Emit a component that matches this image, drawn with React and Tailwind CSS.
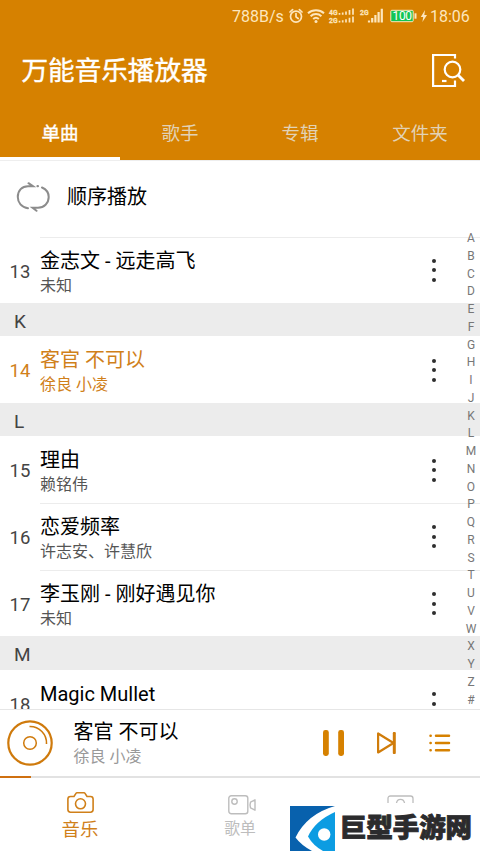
import React from 'react';
import clsx from 'clsx';

const tabs = ['单曲', '歌手', '专辑', '文件夹'];

const rows = [
  { number: 13, title: '金志文 - 远走高飞', artist: '未知' },
  { section: 'K' },
  { number: 14, title: '客官 不可以', artist: '徐良 小凌', active: true },
  { section: 'L' },
  { number: 15, title: '理由', artist: '赖铭伟' },
  { number: 16, title: '恋爱频率', artist: '许志安、许慧欣' },
  { number: 17, title: '李玉刚 - 刚好遇见你', artist: '未知' },
  { section: 'M' },
  { number: 18, title: 'Magic Mullet' },
];

const letters = 'ABCDEFGHIJKLMNOPQRSTUVWXYZ#'.split('');

const StatusBar = () => (
  <div className="flex h-8 items-center pl-[232px] pr-2.5 text-[16px] leading-none text-[#fde6bd]">
    <span className="w-[57px] whitespace-nowrap pt-0.5">788B/s</span>
    <svg className="h-4 w-[130px] shrink-0" viewBox="0 0 130 16" fill="none" stroke="currentColor">
      <g strokeWidth="1.7" strokeLinecap="round">
        <circle cx="7" cy="8.6" r="5.5" />
        <path d="M7 5.5v3.4l2.2 1.6M1 4 3.600 1.600M13 4 10.400 1.600" />
      </g>
      <g strokeWidth="2">
        <path d="M19 5.2c4.4-4 11.6-4 16 0M21.6 8.200c3-2.8 7.8-2.8 10.8 0M24.2 11c1.6-1.5 4-1.5 5.6 0" />
      </g>
      <circle cx="27" cy="13.6" r="1.5" fill="currentColor" stroke="none" />
      <g fill="currentColor" stroke="currentColor" strokeWidth="0.300" fontSize="7.600" fontWeight="700" fontFamily="Roboto">
        <text x="40" y="7" textLength="8.500" lengthAdjust="spacingAndGlyphs">4G</text>
        <text x="40" y="14.600" textLength="8.500" lengthAdjust="spacingAndGlyphs">2G</text>
        <text x="71" y="7" textLength="8.500" lengthAdjust="spacingAndGlyphs">2G</text>
      </g>
      <g strokeWidth="1.700">
        <path d="M50.5 6.8V5M53.7 6.8V4.5M57 6.8V3.5M60.500 6.8V2M64 6.8V.5" />
        <path d="M50.5 14.5v-1.8M53.7 14.5v-2.3M57 14.5v-3.3M60.500 14.5V9.8M64 14.5V8.5" />
      </g>
      <path d="M80 14.5v-2M83.2 14.5V10M86.4 14.5V7M89.6 14.5V4M92.8 14.5V.8" strokeWidth="2.200" />
      <rect x="101.8" y="2.3" width="22.4" height="11.4" rx="1" fill="#12c552" strokeWidth="1" />
      <path d="M126.5 5.3v5.4" strokeWidth="2" />
      <text x="103.500" y="12.4" fontSize="12" textLength="19.500" fill="#fff" stroke="none" fontFamily="Roboto">100</text>
    </svg>
    <svg className="ml-px h-3 w-2 shrink-0" viewBox="0 0 8 12" fill="currentColor">
      <path d="M5 0 .800 6.9h2.4L2.4 12 7 5H4.300z" />
    </svg>
    <span className="ml-0.5 pt-0.5">18:06</span>
  </div>
);

const DeviceSearchIcon = () => (
  <svg className="h-[34px] w-[34px]" viewBox="0 0 34 34" fill="none" stroke="white" strokeWidth="2.200">
    <path d="M24 5.500V2H2.100v31H24v-5.500" />
    <path d="M11 28h4.500" />
    <circle cx="21.5" cy="16.500" r="7.8" />
    <path d="m27 22 6 6" strokeWidth="2.800" />
  </svg>
);

const LoopIcon = () => (
  <svg className="h-[30px] w-[34px]" viewBox="0 0 34 30" fill="none" stroke="#8c8c8c" strokeWidth="2" strokeLinecap="round">
    <path d="M12 26.2C5.500 25.500 1.800 20.500 1.800 15 1.800 8.500 6 4.200 12 4.200h5l-4.500-3" />
    <path d="M26 5.500c4 1.700 6.700 5.300 6.700 9.500 0 6.200-4.700 10.700-10.700 10.700h-5.500l4 3.100" />
    <path d="M21.500 4.200h.4" strokeWidth="2.200" />
  </svg>
);

const MoreButton = () => (
  <button className="flex flex-col items-center gap-[5.500px]">
    <span className="size-1 rounded-full bg-[#2e2e2e]" />
    <span className="size-1 rounded-full bg-[#2e2e2e]" />
    <span className="size-1 rounded-full bg-[#2e2e2e]" />
  </button>
);

const SectionRow = ({ label }) => (
  <div className="flex h-[33.330px] shrink-0 items-center bg-[#ececec] pl-3.5 pt-1 text-[19px] text-[#444]">{label}</div>
);

const SongRow = ({ number, title, artist, active, divider }) => (
  <div className={clsx('flex h-[66.670px] shrink-0', active ? 'text-[#d0801a]' : 'text-black')}>
    <div className={clsx('flex w-10 justify-center pt-[21px] text-[18.500px] leading-[28px]', !active && 'text-[#444]')}>
      {number}
    </div>
    <div className={clsx('flex flex-1 border-t', divider ? 'border-[#ececec]' : 'border-transparent')}>
      <div className="flex-1 pt-[9px]">
        <div className="text-[20px] leading-[28px]">{title}</div>
        {artist && (
          <div className={clsx('text-[16px] leading-[21px]', !active && 'text-[#555]')}>{artist}</div>
        )}
      </div>
      <div className="mr-[44.500px] flex items-center">
        <MoreButton />
      </div>
    </div>
  </div>
);

const SongList = () => (
  <div className="relative h-[472.500px] shrink-0">
    <div className="flex h-full flex-col overflow-hidden">
      {rows.map((row, i) =>
        row.section ? (
          <SectionRow key={row.section} label={row.section} />
        ) : (
          <SongRow key={row.number} {...row} divider={i === 0 || !rows[i - 1].section} />
        )
      )}
    </div>
    <div className="absolute right-0 top-[-6.500px] flex w-[18px] flex-col items-center text-[12px] text-[#777]">
      {letters.map((letter) => (
        <span key={letter} className="h-[17.760px] leading-[17.760px]">{letter}</span>
      ))}
    </div>
  </div>
);

const Player = () => (
  <div className="flex h-[67px] shrink-0 items-center border-t border-[#e6e6e6]">
    <svg className="ml-[7px] size-[46px]" viewBox="0 0 46 46" fill="none" stroke="#cf7a0c">
      <circle cx="23" cy="23" r="21.700" strokeWidth="2.200" />
      <circle cx="23" cy="23" r="6.300" strokeWidth="1.500" />
      <path d="M22.500 6.500A16.500 16.500 0 0 1 39.500 24" strokeWidth="1.600" />
    </svg>
    <div className="ml-[20.500px] flex-1">
      <div className="text-[20px] leading-[27px] text-black">客官 不可以</div>
      <div className="text-[16px] leading-[21px] text-[#999]">徐良 小凌</div>
    </div>
    <svg className="mr-7 h-[26px] w-[22px]" viewBox="0 0 22 26" fill="#d68100">
      <rect x="0" y="0" width="5.800" height="26" rx="2.400" />
      <rect x="15.200" y="0" width="5.800" height="26" rx="2.400" />
    </svg>
    <svg className="mr-8 h-[22px] w-6" viewBox="0 0 24 22" fill="none" stroke="#d07c0a" strokeWidth="2.200" strokeLinejoin="round" strokeLinecap="round">
      <path d="M5.100 1.500v19L20.500 11z" />
      <path d="M21.300 1.300v19.400" strokeWidth="3" />
    </svg>
    <svg className="mr-[29px] h-[18px] w-[22px]" viewBox="0 0 22 18" fill="none" stroke="#d68100" strokeWidth="2.500" strokeLinecap="round">
      <path d="M1.500 1.700h.2M7 1.700h13M1.500 9h.2M7 9h13M1.500 16.300h.2M7 16.300h13" />
    </svg>
  </div>
);

const BottomNav = () => (
  <div className="relative grid h-[75px] shrink-0 grid-cols-3">
    <div className="flex flex-col items-center pt-[13.500px] text-[#d0801a]">
      <svg className="h-[21px] w-[27px]" viewBox="0 0 27 21" fill="none" stroke="currentColor" strokeWidth="1.600">
        <path d="M3.500 4.500H7L9 1.300Q9.300.8 10 .8h7q.7 0 1 .5l2 3.200h3.500q2.600 0 2.600 2.600v10.500q0 2.600-2.600 2.600h-20Q.9 20.200.9 17.600V7.100q0-2.600 2.600-2.600z" />
        <circle cx="13.500" cy="11.800" r="5" />
      </svg>
      <span className="mt-[4px] text-[18.400px] leading-[26px]">音乐</span>
    </div>
    <div className="flex flex-col items-center pt-[17px] text-[#bdbdbd]">
      <svg className="ml-1 h-5 w-7" viewBox="0 0 28 20" fill="none" stroke="currentColor" strokeWidth="1.400" strokeLinejoin="round">
        <rect x=".8" y=".8" width="19" height="18" rx="2.500" />
        <circle cx="6.500" cy="6.500" r="2.700" />
        <path d="M27 4.800v10.400l-4.500-2.400Q21.500 10 22.500 7.200z" />
      </svg>
      <span className="mt-[3px] text-[15.800px] leading-[22px]">歌单</span>
    </div>
    <div className="flex flex-col items-center pt-[17px] text-[#bdbdbd]">
      <svg className="h-2 w-[27px]" viewBox="0 0 27 8" fill="none" stroke="currentColor" strokeWidth="1.300">
        <path d="M1 8V3.500Q1 1 3.500 1h20Q26 1 26 3.500V8M9.500 8q.5-3.700 4-3.700t4 3.700" />
      </svg>
    </div>
    <div className="absolute bottom-0 right-0 flex h-[50px] w-[194px] items-center bg-white pl-1">
      <svg className="size-[45px] shrink-0" viewBox="0 0 45 45">
        <path d="M0 0h45v45H0z" fill="#fff" />
        <path d="M0 0h45Q17 8 5.500 31.500 11 39 22 45H0z" fill="#0861ad" />
        <path d="M45 6Q25 15 18 30.500q5 9 15 14.500h12z" fill="#0c9ce2" />
        <circle cx="34.200" cy="28.500" r="6.200" fill="#fff" />
      </svg>
      <span className="ml-[5px] whitespace-nowrap text-[26.400px] font-black leading-none text-[#2b2b2d] [-webkit-text-stroke:0.900px_#2b2b2d]">
        巨型手游网
      </span>
    </div>
  </div>
);

const App = () => {
  return (
    <div className="flex h-[853px] w-[480px] flex-col overflow-hidden bg-white font-[Roboto,'Noto_Sans_CJK_SC',sans-serif]">
      <header className="flex h-40 shrink-0 flex-col bg-[#d68100] text-white">
        <StatusBar />
        <div className="flex h-[76px] items-center justify-between pl-[21.500px] pr-[15px]">
          <h1 className="pt-0.5 text-[26.600px] [-webkit-text-stroke:0.400px_white]">万能音乐播放器</h1>
          <DeviceSearchIcon />
        </div>
        <nav className="grid flex-1 grid-cols-4">
          {tabs.map((tab, i) => (
            <div
              key={tab}
              className={clsx(
                'flex items-center justify-center border-b-[3px] pt-1 text-[18.500px]',
                i === 0 ? 'border-white [-webkit-text-stroke:0.400px_white]' : 'border-transparent text-[#e2d2b6]'
              )}
            >
              {tab}
            </div>
          ))}
        </nav>
      </header>
      <div className="flex h-[76.500px] shrink-0 items-center border-t border-[#eee] pl-4 pb-1">
        <LoopIcon />
        <span className="ml-[17px] text-[20px] text-black">顺序播放</span>
      </div>
      <SongList />
      <Player />
      <div className="h-0.5 shrink-0 bg-[#e2e2e2]">
        <div className="h-full w-[31px] bg-[#cf7010]" />
      </div>
      <BottomNav />
    </div>
  );
};

export default App;
